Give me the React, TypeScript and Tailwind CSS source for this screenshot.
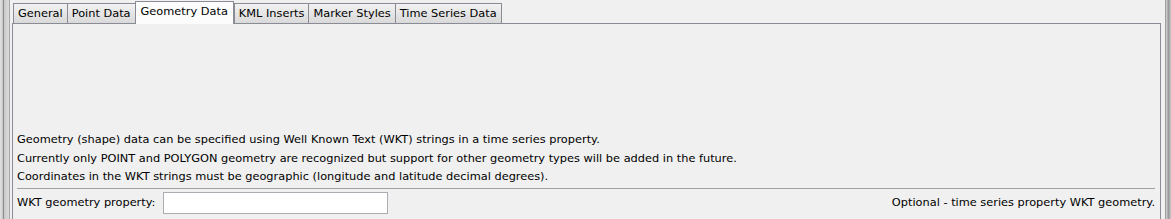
import React from "react";

const tabs = ["General", "Point Data", "Geometry Data", "KML Inserts", "Marker Styles", "Time Series Data"];

export default function App() {
  return (
    <div
      className="w-[1171px] h-[219px] bg-[#f0f0f0] flex overflow-hidden text-[11.35px] text-black"
      style={{ fontFamily: '"DejaVu Sans", Verdana, sans-serif' }}
    >
      <div className="w-[3px] bg-gradient-to-r from-[#e6e6e6] to-[#c4c4c4]" />
      <div className="w-[1px] bg-[#8c8c8c]" />
      <div className="w-[5px] bg-gradient-to-r from-[#c8c8c8] to-[#dcdcdc]" />
      <div className="w-[1px] bg-[#a6a6a6]" />
      <div className="w-[2px]" />
      <div className="flex-1 flex flex-col">
        <div className="flex items-end h-[23px] pl-[1px]">
          {tabs.map((t) => {
            const sel = t === "Geometry Data";
            return sel ? (
              <div
                key={t}
                className="h-[23px] -mb-[1px] px-[5px] border border-b-0 border-[#898c95] bg-[#fcfcfc] flex items-center relative z-10 whitespace-nowrap"
              >
                <span className="leading-none -mt-[2px]">{t}</span>
              </div>
            ) : (
              <div
                key={t}
                className="h-[20px] px-[4px] border border-b-0 border-[#898c95] bg-gradient-to-b from-[#f2f2f2] to-[#d9d9d9] flex items-center -mr-[1px] whitespace-nowrap"
              >
                <span className="leading-none">{t}</span>
              </div>
            );
          })}
        </div>
        <div className="flex-1 border-t border-l border-r border-[#898c95] w-[1149px] flex flex-col px-[4px]">
          <div className="h-[106px]" />
          <div className="leading-[18.5px] whitespace-nowrap">
            <div>Geometry (shape) data can be specified using Well Known Text (WKT) strings in a time series property.</div>
            <div>Currently only POINT and POLYGON geometry are recognized but support for other geometry types will be added in the future.</div>
            <div>Coordinates in the WKT strings must be geographic (longitude and latitude decimal degrees).</div>
          </div>
          <div className="h-[1px] bg-[#a0a0a0] mt-[2px] mr-[1px]" />
          <div className="flex items-center mt-[3px] h-[22px] whitespace-nowrap">
            <span className="w-[146px]">WKT geometry property:</span>
            <div className="w-[225px] h-[22px] border border-[#abadb3] bg-white" />
            <div className="flex-1" />
            <span className="mr-[1px]">Optional - time series property WKT geometry.</span>
          </div>
        </div>
      </div>
      <div className="w-[4px]" />
      <div className="w-[1px] bg-[#a0a0a0]" />
      <div className="w-[5px] bg-gradient-to-r from-[#d4d4d4] via-[#9a9a9a] to-[#c8c8c8]" />
    </div>
  );
}
